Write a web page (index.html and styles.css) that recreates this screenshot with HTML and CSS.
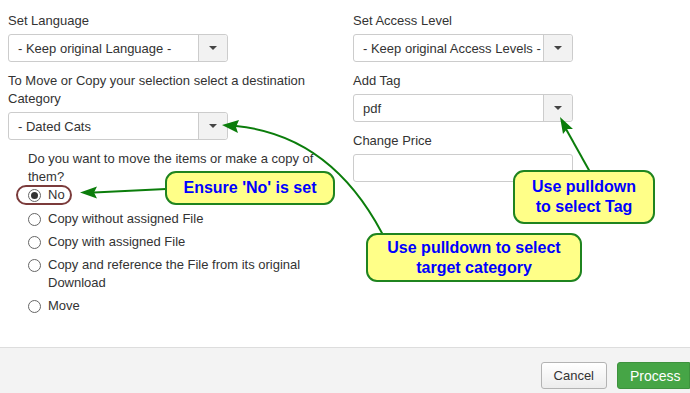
FILE: index.html
```html
<!DOCTYPE html>
<html lang="en">
<head>
    <meta charset="UTF-8">
    <title>Batch process</title>
    <link rel="stylesheet" href="styles.css">
</head>
<body>
    <div class="modal">
        <div class="modal-body">
            <div class="column">
                <label class="field-label">Set Language</label>
                <div class="select">
                    <span class="select-value">- Keep original Language -</span>
                    <span class="select-btn"><i class="caret"></i></span>
                </div>

                <label class="field-label">To Move or Copy your selection select a destination Category</label>
                <div class="select">
                    <span class="select-value">- Dated Cats</span>
                    <span class="select-btn"><i class="caret"></i></span>
                </div>

                <div class="copy-options">
                    <p class="question">Do you want to move the items or make a copy of them?</p>
                    <div class="radio-row first"><span class="radio checked"></span>No</div>
                    <div class="radio-row"><span class="radio"></span>Copy without assigned File</div>
                    <div class="radio-row"><span class="radio"></span>Copy with assigned File</div>
                    <div class="radio-row"><span class="radio"></span>Copy and reference the File from its original Download</div>
                    <div class="radio-row"><span class="radio"></span>Move</div>
                </div>
            </div>

            <div class="column">
                <label class="field-label">Set Access Level</label>
                <div class="select">
                    <span class="select-value">- Keep original Access Levels -</span>
                    <span class="select-btn"><i class="caret"></i></span>
                </div>

                <label class="field-label">Add Tag</label>
                <div class="select">
                    <span class="select-value">pdf</span>
                    <span class="select-btn"><i class="caret"></i></span>
                </div>

                <label class="field-label">Change Price</label>
                <div class="text-input"></div>
            </div>
        </div>

        <div class="modal-footer">
            <button class="btn">Cancel</button>
            <button class="btn btn-success">Process</button>
        </div>
    </div>

    <!-- Anmerkungen ueber dem Formular -->
    <svg class="notes" width="690" height="393" viewBox="0 0 690 393">
        <rect x="17" y="186" width="54" height="18" rx="9" fill="none" stroke="#7b3b3b" stroke-width="2"/>
        <line x1="166" y1="189" x2="94" y2="192.5" stroke="#0b7d0b" stroke-width="2"/>
        <polygon points="80,192.5 97,186.5 94,192.5 97,198.5" fill="#0b7d0b"/>
        <path d="M388,245 Q336,136 236,126" fill="none" stroke="#0b7d0b" stroke-width="2"/>
        <polygon points="222,125 239,120 236,127 238,133" fill="#0b7d0b"/>
        <line x1="590" y1="172" x2="566" y2="129" stroke="#0b7d0b" stroke-width="2"/>
        <polygon points="560,117 573,129 567,129 563,134" fill="#0b7d0b"/>
    </svg>

    <div class="callout callout-no">Ensure 'No' is set</div>
    <div class="callout callout-tag">Use pulldown<br>to select Tag</div>
    <div class="callout callout-cat">Use pulldown to select<br>target category</div>
</body>
</html>
```

FILE: styles.css
```css
body {
    margin: 0;
    font-family: "Liberation Sans", Arial, sans-serif;
    font-size: 13px;
    color: #333;
    background: #fff;
    width: 690px;
    height: 393px;
    overflow: hidden;
    position: relative;
}
.modal {
    display: flex;
    flex-direction: column;
    height: 393px;
}
.modal-body {
    flex: 1;
    display: flex;
    gap: 20px;
    padding: 11px 8px 0 8px;
}
.column {
    width: 325px;
    display: flex;
    flex-direction: column;
    align-items: flex-start;
}
.field-label {
    display: block;
    line-height: 18px;
    padding-top: 1px;
    margin-bottom: 4px;
}
.select, .text-input {
    box-sizing: border-box;
    width: 220px;
    height: 28px;
    border: 1px solid #ccc;
    border-radius: 3px;
    display: flex;
    align-items: stretch;
    margin-bottom: 9px;
    background: #fff;
}
.select-value {
    flex: 1;
    padding-left: 9px;
    line-height: 27px;
    white-space: nowrap;
    overflow: hidden;
}
.select-btn {
    width: 28px;
    border-left: 1px solid #ccc;
    background: #f2f2f2;
    display: flex;
    align-items: center;
    justify-content: center;
    border-radius: 0 3px 3px 0;
}
.caret {
    width: 0;
    height: 0;
    border-left: 4px solid transparent;
    border-right: 4px solid transparent;
    border-top: 4px solid #444;
}
.copy-options {
    padding-left: 20px;
    padding-top: 1px;
}
.question {
    margin: 0;
    line-height: 18px;
}
.radio-row {
    display: flex;
    align-items: flex-start;
    line-height: 18px;
    margin-bottom: 5px;
}
.radio-row.first {
    margin-bottom: 6px;
}
.radio {
    flex: none;
    box-sizing: border-box;
    width: 13px;
    height: 13px;
    margin: 3px 7px 0 0;
    border: 1px solid #666;
    border-radius: 50%;
    background: #fff;
    position: relative;
}
.radio.checked::after {
    content: "";
    position: absolute;
    left: 2px;
    top: 2px;
    width: 7px;
    height: 7px;
    border-radius: 50%;
    background: #333;
}
.modal-footer {
    border-top: 1px solid #ddd;
    background: #f3f3f3;
    height: 46px;
    box-sizing: border-box;
    padding-top: 14px;
    display: flex;
    justify-content: flex-end;
    align-items: flex-start;
    gap: 10px;
}
.btn {
    font-family: "Liberation Sans", Arial, sans-serif;
    font-size: 13px;
    height: 27px;
    padding: 0 12px;
    border: 1px solid #b3b3b3;
    border-radius: 3px;
    background: linear-gradient(#fff, #ececec);
    color: #333;
}
.btn-success {
    width: 73px;
    border-color: #3e923e;
    background: #46a546;
    color: #fff;
    border-radius: 3px 0 0 3px;
    font-size: 14px;
}
.notes {
    position: absolute;
    left: 0;
    top: 0;
    pointer-events: none;
}
.callout {
    position: absolute;
    box-sizing: border-box;
    background: #ffff88;
    border: 2px solid #1f841f;
    border-radius: 11px;
    color: #0000ff;
    font-weight: bold;
    font-size: 16px;
    line-height: 20px;
    text-align: center;
    display: flex;
    align-items: center;
    justify-content: center;
}
.callout-no {
    left: 165px;
    top: 171px;
    width: 170px;
    height: 34px;
}
.callout-tag {
    left: 513px;
    top: 170px;
    width: 142px;
    height: 54px;
}
.callout-cat {
    left: 366px;
    top: 233px;
    width: 216px;
    height: 49px;
}
```
